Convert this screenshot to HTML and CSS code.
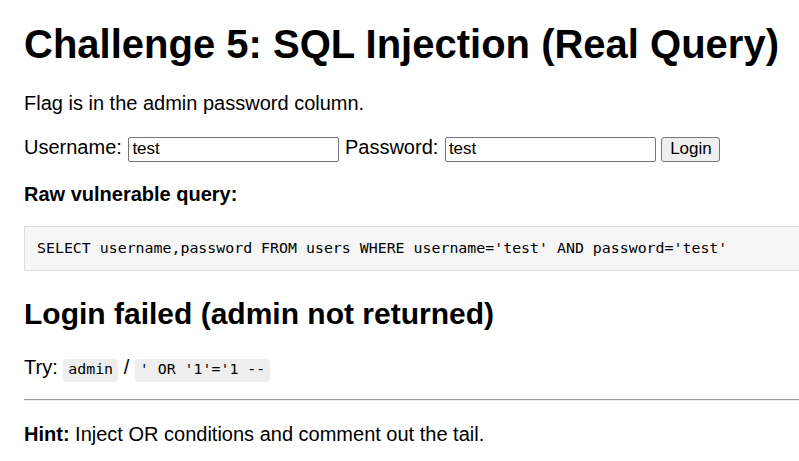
FILE: index.html
```html
<!DOCTYPE html>
<html lang="en">
<head>
<meta charset="utf-8">
<title>Challenge 5: SQL Injection (Real Query)</title>
<link rel="stylesheet" href="styles.css">
</head>
<body>
<div class="page">
  <h1 class="title">Challenge 5: SQL Injection (Real Query)</h1>
  <p class="text">Flag is in the admin password column.</p>
  <form class="login">
    <label class="label">Username: <input class="field" type="text" name="username" value="test"></label>
    <label class="label">Password: <input class="field" type="text" name="password" value="test"></label>
    <button class="btn" type="button">Login</button>
  </form>
  <p class="text"><strong>Raw vulnerable query:</strong></p>
  <pre class="query">SELECT username,password FROM users WHERE username='test' AND password='test'</pre>
  <h2 class="result">Login failed (admin not returned)</h2>
  <p class="text">Try: <code class="pill">admin</code> / <code class="pill">' OR '1'='1 --</code></p>
  <hr class="rule">
  <p class="text"><strong>Hint:</strong> Inject OR conditions and comment out the tail.</p>
</div>
</body>
</html>
```

FILE: styles.css
```css
html, body {
  overflow-x: hidden;
}

body {
  margin: 0;
  background: #ffffff;
  color: #000000;
  font-family: "Liberation Sans", Arial, sans-serif;
  font-size: 20px;
}

.page {
  width: 800px;
  padding: 22px 0 0 24px;
}

.title {
  font-size: 40px;
  font-weight: bold;
  margin: 0 0 25px;
  line-height: normal;
}

.text {
  margin: 20px 0;
}

.login {
  margin: 21px 0 21px;
  line-height: normal;
}

.label {
  font-size: 20px;
}

.field {
  box-sizing: border-box;
  width: 211px;
  height: 25px;
  margin: 0 0 0 1px;
  padding: 1px 3px;
  border: 1px solid #767676;
  border-radius: 2px;
  font-family: "Liberation Sans", Arial, sans-serif;
  font-size: 17px;
  color: #000;
  background: #fff;
  vertical-align: baseline;
}

.btn {
  box-sizing: border-box;
  width: 59px;
  height: 25px;
  padding: 0 6px;
  border: 1px solid #767676;
  border-radius: 3px;
  background: #efefef;
  font-family: "Liberation Sans", Arial, sans-serif;
  font-size: 17px;
  color: #000;
  vertical-align: baseline;
}

.query {
  margin: 20px 0;
  padding: 12px 12px;
  border: 1px solid #dddddd;
  background: #f6f6f6;
  font-family: "DejaVu Sans Mono", monospace;
  font-size: 14.9px;
  line-height: 19px;
}

.result {
  font-size: 30px;
  font-weight: bold;
  margin: 26px 0 25px;
}

.pill {
  font-family: "DejaVu Sans Mono", monospace;
  font-size: 14.9px;
  background: #eeeeee;
  border-radius: 4px;
  padding: 1px 5px 4px;
}

.rule {
  margin: 20px 0 22px;
  border: 0;
  border-top: 1px solid #9a9a9a;
  border-bottom: 1px solid #eeeeee;
  height: 0;
}
```
